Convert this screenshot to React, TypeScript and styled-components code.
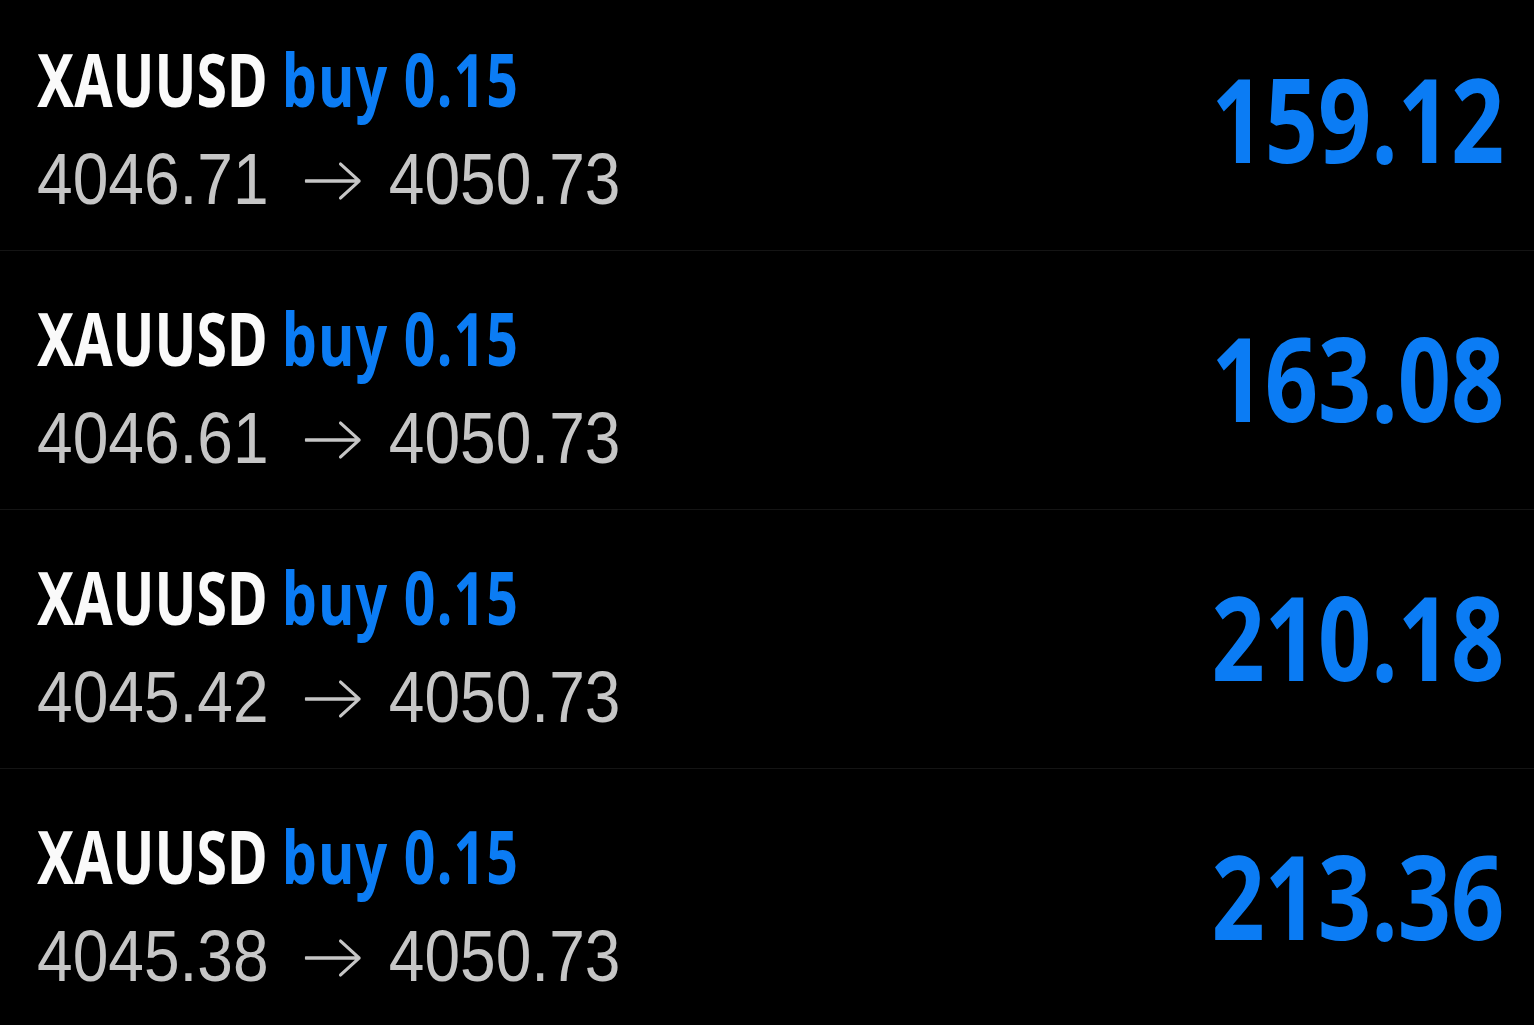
import styled, { createGlobalStyle } from 'styled-components';

const GlobalStyle = createGlobalStyle`
  html, body {
    margin: 0;
    padding: 0;
    background: #000;
    overflow: hidden;
  }
`;

const List = styled.div`
  display: flex;
  flex-direction: column;
  margin-top: -8px;
  width: 100%;
`;

const Row = styled.div`
  align-items: flex-start;
  border-bottom: 1px solid #141414;
  box-sizing: border-box;
  display: flex;
  height: 259px;
  justify-content: space-between;
  padding: 0 30px 0 37px;
`;

const Info = styled.div`
  display: flex;
  flex-direction: column;
  padding-top: 39px;
`;

// the reference uses a condensed face; none is installed, so squeeze the regular one
const Title = styled.div`
  color: #fafafa;
  font-family: 'Noto Sans', 'DejaVu Sans', sans-serif;
  font-size: 73px;
  font-weight: 700;
  line-height: 96px;
  transform: scaleX(0.76);
  transform-origin: left center;
  white-space: nowrap;
`;

const Accent = styled.span`
  color: #0b7cf4;
  letter-spacing: 1.5px;
`;

const Prices = styled.div`
  align-items: center;
  color: #c6c6c6;
  display: flex;
  font-family: 'Liberation Sans', Arial, sans-serif;
  font-size: 72px;
  height: 100px;
  line-height: 100px;
  margin-top: 2px;
  transform: scaleX(0.89);
  transform-origin: left center;
  white-space: nowrap;
`;

const ArrowIcon = styled.svg`
  flex: none;
  margin: 4px 30px 0 41px;
`;

const Amount = styled.div`
  color: #0b7cf4;
  font-family: 'Noto Sans', 'DejaVu Sans', sans-serif;
  font-size: 116px;
  font-weight: 700;
  line-height: 116px;
  margin-top: 68px;
  transform: scaleX(0.804);
  transform-origin: right center;
`;

const Arrow = () => (
  <ArrowIcon width="64" height="40" viewBox="0 0 64 40" fill="none">
    <path
      d="M1 20H61M40 3L61 20L40 37"
      stroke="#c6c6c6"
      strokeWidth="3.4"
      strokeLinecap="round"
      strokeLinejoin="round"
    />
  </ArrowIcon>
);

const trades = [
  { from: '4046.71', to: '4050.73', profit: '159.12' },
  { from: '4046.61', to: '4050.73', profit: '163.08' },
  { from: '4045.42', to: '4050.73', profit: '210.18' },
  { from: '4045.38', to: '4050.73', profit: '213.36' },
];

export default function App() {
  return (
    <>
      <GlobalStyle />
      <List>
        {trades.map((t) => (
          <Row key={t.from}>
            <Info>
              <Title>
                XAUUSD <Accent>buy 0.15</Accent>
              </Title>
              <Prices>
                <span>{t.from}</span>
                <Arrow />
                <span>{t.to}</span>
              </Prices>
            </Info>
            <Amount>{t.profit}</Amount>
          </Row>
        ))}
      </List>
    </>
  );
}
